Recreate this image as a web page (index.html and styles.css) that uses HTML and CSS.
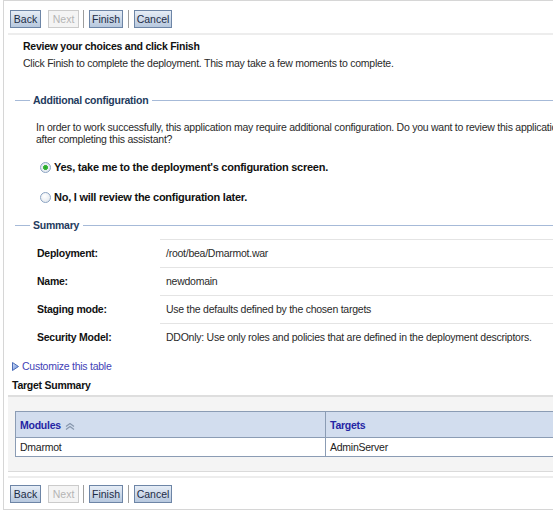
FILE: index.html
```html
<!doctype html>
<html>
<head>
<meta charset="utf-8">
<title>Install Application Assistant</title>
<link rel="stylesheet" href="styles.css">
</head>
<body>
<div class="page">
    <div class="toolbar">
        <button class="btn" type="button">Back</button>
        <button class="btn off" type="button">Next</button>
        <span class="bar-sep"></span>
        <button class="btn wide" type="button">Finish</button>
        <span class="bar-sep"></span>
        <button class="btn wider" type="button">Cancel</button>
    </div>
    <div class="line"></div>

    <div class="intro">
        <h2>Review your choices and click Finish</h2>
        <p>Click Finish to complete the deployment. This may take a few moments to complete.</p>
    </div>

    <div class="legend">Additional configuration</div>
    <p class="note">In order to work successfully, this application may require additional configuration. Do you want to review this application's configuration<br>after completing this assistant?</p>
    <label class="choice"><span class="radio on"></span>Yes, take me to the deployment's configuration screen.</label>
    <label class="choice"><span class="radio"></span>No, I will review the configuration later.</label>

    <div class="legend">Summary</div>
    <dl class="kv">
        <dt>Deployment:</dt><dd>/root/bea/Dmarmot.war</dd>
        <dt>Name:</dt><dd>newdomain</dd>
        <dt>Staging mode:</dt><dd>Use the defaults defined by the chosen targets</dd>
        <dt>Security Model:</dt><dd>DDOnly: Use only roles and policies that are defined in the deployment descriptors.</dd>
    </dl>

    <a class="customize" href="#">
        <svg width="7" height="9" viewBox="0 0 7 9"><defs><linearGradient id="tri" x1="0" y1="0" x2="1" y2="1"><stop offset="0" stop-color="#dbe6fa"/><stop offset="1" stop-color="#5a7fcf"/></linearGradient></defs><polygon points="0.5,0.5 6.5,4.5 0.5,8.5" fill="url(#tri)" stroke="#4a6cb8"/></svg>
        Customize this table
    </a>
    <div class="ts-title">Target Summary</div>
    <div class="ts-box">
        <table class="targets">
            <tr>
                <th class="col-mod">Modules <svg class="sort" width="10" height="7" viewBox="0 0 10 7"><polyline points="1,3.5 5,0.5 9,3.5" fill="none" stroke="#8797ad" stroke-width="1.2"/><polyline points="1,6.5 5,3.5 9,6.5" fill="none" stroke="#8797ad" stroke-width="1.2"/></svg></th>
                <th>Targets</th>
            </tr>
            <tr>
                <td>Dmarmot</td>
                <td>AdminServer</td>
            </tr>
        </table>
    </div>
    <div class="line low"></div>

    <div class="toolbar low">
        <button class="btn" type="button">Back</button>
        <button class="btn off" type="button">Next</button>
        <span class="bar-sep"></span>
        <button class="btn wide" type="button">Finish</button>
        <span class="bar-sep"></span>
        <button class="btn wider" type="button">Cancel</button>
    </div>
</div>
</body>
</html>
```

FILE: styles.css
```css
*{ margin:0; padding:0}
html,body{ overflow:hidden}
body{ font-family:"Liberation Sans", Arial, sans-serif; font-size:10.5px; letter-spacing:-0.25px; color:#2a2a2a; background:#fff}
.page{ margin-left:3px; width:640px; border:1px solid #d6d6d6; border-right:0; padding-bottom:6px}

.toolbar{ display:flex; align-items:center; height:18px; padding:9px 0 0 6px}
.toolbar.low{ padding-top:7px}
.btn{ width:31px; height:18px; border:1px solid #6d85a6; background:linear-gradient(#e6edf6,#b7c8de); font:inherit; color:#1c2c46; margin-right:7px; text-align:center}
.btn.wide{ width:34px}
.btn.wider{ width:38px}
.btn.off{ border-color:#cbcbcb; background:#f4f4f4; color:#b4b4b4; margin-right:4px}
.btn + .bar-sep + .btn{ margin-right:5px}
.bar-sep{ width:1px; height:18px; background:#9d9d9d; margin-right:5px}

.line{ height:2px; background:#ededed; margin:5px 0 0 4px}
.line.low{ margin-top:4px}

.intro{ padding-left:19px}
.intro h2{ margin-top:4px; font-size:10.5px; line-height:14px; color:#111}
.intro p{ margin-top:3px; line-height:14px}

.legend{ display:flex; align-items:center; margin-top:23px; line-height:14px; font-weight:bold; color:#243b5e}
.legend::before{ content:""; width:15px; height:1px; background:#a6bad8; margin:0 3px 0 11px}
.legend::after{ content:""; flex:1; height:1px; background:#a6bad8; margin-left:4px}
.legend + .kv{ margin-top:7px}

.note{ margin:14px 0 0 32px; line-height:12px; white-space:nowrap}
.choice{ display:flex; align-items:center; margin:15px 0 0 36px; line-height:14px; font-size:11px; font-weight:bold; color:#111}
.choice + .choice{ margin-top:16px}
.choice + .legend{ margin-top:14px}
.radio{ width:9px; height:9px; border:1px solid #8ba3c2; border-radius:50%; margin-right:3px; background:radial-gradient(circle at 40% 35%, #fff 0, #dde3ea 100%)}
.radio.on{ background:radial-gradient(circle, #26a326 0, #3cb83c 2.2px, #e9eef3 2.8px, #dfe4ea 100%)}

.kv{ display:grid; grid-template-columns:123px 1fr; margin-left:33px}
.kv dt{ height:28px; line-height:28px; font-weight:bold; color:#111}
.kv dd{ height:28px; box-sizing:border-box; border-top:1px solid #e4e4e4; line-height:27px; padding-left:6px; white-space:nowrap}

.customize{ display:flex; align-items:center; margin:8px 0 0 8px; line-height:14px; color:#4242b6; text-decoration:none}
.customize svg{ margin-right:3px}
.ts-title{ margin:5px 0 0 8px; line-height:14px; font-weight:bold; color:#111}
.ts-box{ margin:3px 0 0 4px; border-top:2px solid #dedede; border-bottom:1px solid #dadada; background:#f4f4f4; padding:14px 0 14px 7px}

.targets{ border-collapse:collapse; width:640px; border:1px solid #8b9cb4}
.targets th{ height:25px; background:#d2ddee; text-align:left; padding-left:4px; color:#2525a4; border:1px solid #8b9cb4}
.targets th.col-mod{ width:305px}
.targets td{ height:18px; background:#fff; padding-left:4px; border:1px solid #8b9cb4; color:#222}
.sort{ margin-left:1px; vertical-align:-1px}
```
